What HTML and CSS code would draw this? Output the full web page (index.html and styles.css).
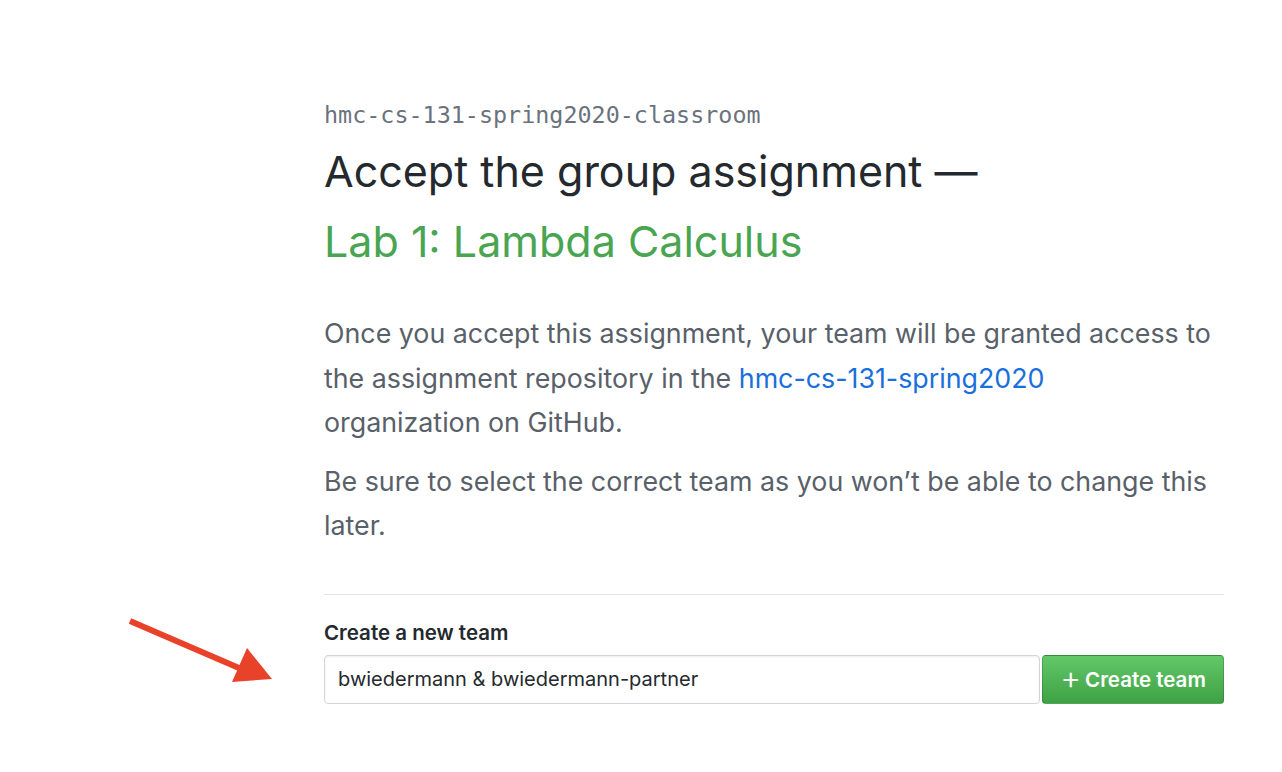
FILE: index.html
```html
<!DOCTYPE html>
<html>
<head>
<meta charset="utf-8">
<link rel="stylesheet" href="styles.css">
</head>
<body>
<svg class="arrow" width="170" height="90" viewBox="0 0 170 90">
  <line x1="23" y1="23" x2="132" y2="70" stroke="#e8432a" stroke-width="6" stroke-linecap="butt"/>
  <polygon points="140,50 125,84 165,81" fill="#e8432a"/>
</svg>
<main class="page">
  <div class="org">hmc-cs-131-spring2020-classroom</div>
  <h1 class="title">Accept the group assignment —</h1>
  <h2 class="assignment">Lab 1: Lambda Calculus</h2>
  <p class="lead">Once you accept this assignment, your team will be granted access to the assignment repository in the <a href="#" class="link">hmc-cs-131-spring2020</a> organization&nbsp;on GitHub.</p>
  <p class="lead">Be sure to select the correct team as you won’t be able to change this later.</p>
  <hr class="divider">
  <form class="team-form">
    <label class="label">Create a new team</label>
    <div class="row">
      <input class="input" type="text" value="bwiedermann &amp; bwiedermann-partner">
      <button class="btn" type="button"><span class="plus">+</span>Create team</button>
    </div>
  </form>
</main>
</body>
</html>
```

FILE: styles.css
```css
html, body {
  margin: 0;
  padding: 0;
  background: #ffffff;
}
body {
  font-family: Inter, "Liberation Sans", sans-serif;
  color: #24292e;
}
.page {
  width: 900px;
  margin-left: 324px;
  padding-top: 101px;
}
.org {
  font-family: "DejaVu Sans Mono", "Liberation Mono", monospace;
  font-size: 23.4px;
  line-height: 28px;
  color: #6a737d;
}
.title {
  margin: 15px 0 0;
  font-size: 43px;
  font-weight: 400;
  line-height: 54px;
  color: #24292e;
}
.assignment {
  margin: 16px 0 0;
  font-size: 43px;
  font-weight: 400;
  line-height: 54px;
  color: #4aa552;
}
.lead {
  margin: 43px 0 0;
  font-size: 26.8px;
  line-height: 44.5px;
  color: #586069;
}
.lead + .lead {
  margin-top: 14px;
}
.link {
  color: #1a6fdc;
  text-decoration: none;
}
.divider {
  margin: 46px 0 0;
  border: 0;
  border-top: 1px solid #e1e4e8;
  height: 0;
}
.team-form {
  margin-top: 25px;
}
.label {
  display: block;
  font-size: 20.5px;
  font-weight: 600;
  line-height: 26px;
  color: #24292e;
}
.row {
  display: flex;
  gap: 2px;
  margin-top: 9px;
}
.input {
  flex: 1;
  height: 49px;
  box-sizing: border-box;
  border: 1px solid #d1d5da;
  border-radius: 4px;
  padding: 0 13px;
  font-family: Inter, "Liberation Sans", sans-serif;
  font-size: 20px;
  color: #24292e;
  box-shadow: inset 0 1px 2px rgba(27,31,35,.075);
  outline: none;
}
.btn {
  width: 182px;
  height: 49px;
  border: 1px solid rgba(27,31,35,.2);
  border-radius: 4px;
  background: linear-gradient(180deg, #62c868, #3fa145);
  color: #fff;
  font-family: Inter, "Liberation Sans", sans-serif;
  font-size: 20.5px;
  font-weight: 600;
  display: flex;
  align-items: center;
  justify-content: center;
  gap: 4px;
  padding: 0;
}
.plus {
  font-size: 32px;
  font-weight: 300;
  line-height: 1;
  margin-top: -3px;
}
.arrow {
  position: absolute;
  left: 107px;
  top: 598px;
}
```
